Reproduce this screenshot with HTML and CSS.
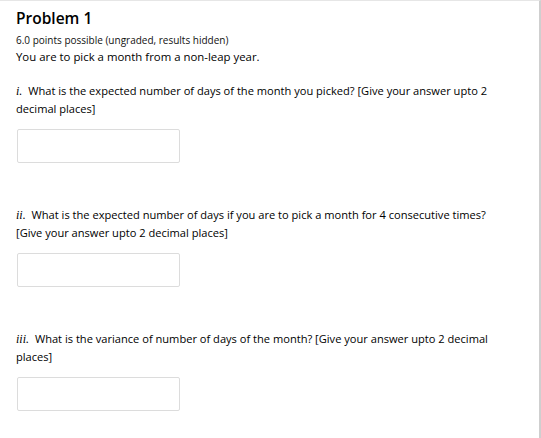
FILE: index.html
```html
<!DOCTYPE html>
<html>
<head>
<meta charset="utf-8">
<link rel="stylesheet" href="styles.css">
</head>
<body>
<div class="frame">
  <div class="problem">
    <h2 class="title">Problem 1</h2>
    <div class="meta">6.0 points possible (ungraded, results hidden)</div>
    <p class="intro">You are to pick a month from a non-leap year.</p>
    <div class="question">
      <p class="qtext"><span class="num">i.</span> What is the expected number of days of the month you picked? [Give your answer upto 2 decimal places]</p>
      <input class="answer" type="text">
    </div>
    <div class="question">
      <p class="qtext"><span class="num">ii.</span> What is the expected number of days if you are to pick a month for 4 consecutive times? [Give your answer upto 2 decimal places]</p>
      <input class="answer" type="text">
    </div>
    <div class="question">
      <p class="qtext"><span class="num">iii.</span> What is the variance of number of days of the month? [Give your answer upto 2 decimal places]</p>
      <input class="answer" type="text">
    </div>
  </div>
</div>
</body>
</html>
```
FILE: styles.css
```css
html, body {
  margin: 0;
  padding: 0;
  background: #fff;
}
body {
  font-family: "Open Sans", "Noto Sans", sans-serif;
  color: #000;
  width: 541px;
  height: 438px;
  overflow: hidden;
}
.frame {
  box-sizing: border-box;
  width: 541px;
  height: 438px;
  border-top: 1px solid #e6e6e6;
  border-right: 2px solid #cfcfcf;
}
.problem {
  padding: 6px 16px 0 16px;
  width: 480px;
}
.title {
  margin: 0;
  font-size: 15.5px;
  font-weight: 600;
  line-height: 22px;
  color: #000;
}
.meta {
  margin-top: 4px;
  font-size: 10px;
  line-height: 14px;
  color: #111;
}
.intro {
  margin: 1px 0 0 0;
  font-size: 11.4px;
  line-height: 17px;
}
.question {
  margin-top: 17px;
}
.question + .question {
  margin-top: 43px;
}
.qtext {
  margin: 0;
  font-size: 11.1px;
  line-height: 17px;
}
.num {
  font-family: "Liberation Serif", serif;
  font-style: italic;
  font-size: 12px;
  margin-right: 3px;
}
.answer {
  display: block;
  box-sizing: border-box;
  margin: 12px 0 0 1px;
  width: 163px;
  height: 34px;
  border: 1px solid #dcdcdc;
  border-radius: 2px;
  background: #fff;
  outline: none;
}
```
